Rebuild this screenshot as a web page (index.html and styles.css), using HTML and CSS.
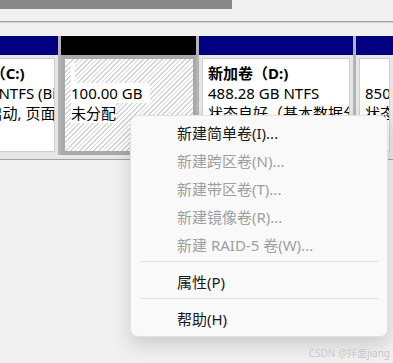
FILE: index.html
```html
<!DOCTYPE html>
<html lang="zh-CN">
<head>
<meta charset="utf-8">
<title>磁盘管理</title>
<link rel="stylesheet" href="styles.css">
</head>
<body>
<div class="screen">
  <div class="toppane"><div class="thumb"></div></div>
  <div class="divider"></div>
  <div class="spacer"></div>
  <div class="disk-row">
    <div class="part part-c">
      <div class="head head-primary"></div>
      <div class="body">
        <div class="box">
          <div class="line bold">Windows（C:)</div>
          <div class="line">237.85 GB NTFS (BitLocker 已加密)</div>
          <div class="line">状态良好(启动, 页面文件, 故障转储, 基本数据分区)</div>
        </div>
      </div>
    </div>
    <div class="part part-free">
      <div class="head head-free"></div>
      <div class="body body-selected">
        <div class="hatch">
          <div class="chip">&nbsp;</div>
          <div class="chip">100.00 GB&nbsp;&nbsp;</div>
          <div class="chip">未分配</div>
        </div>
      </div>
    </div>
    <div class="part part-d">
      <div class="head head-primary"></div>
      <div class="body">
        <div class="box">
          <div class="line bold">新加卷（D:)</div>
          <div class="line">488.28 GB NTFS</div>
          <div class="line">状态良好（基本数据分区）</div>
        </div>
      </div>
    </div>
    <div class="part part-e">
      <div class="head head-primary"></div>
      <div class="body">
        <div class="box">
          <div class="line bold">&nbsp;</div>
          <div class="line">850.00 GB NTFS</div>
          <div class="line">状态良好（基本数据分区）</div>
        </div>
      </div>
    </div>
  </div>
  <div class="row-foot"></div>
  <div class="rest"></div>
</div>

<div class="menu">
  <div class="item">新建简单卷(I)...</div>
  <div class="item disabled">新建跨区卷(N)...</div>
  <div class="item disabled">新建带区卷(T)...</div>
  <div class="item disabled">新建镜像卷(R)...</div>
  <div class="item disabled">新建 RAID-5 卷(W)...</div>
  <div class="sep"></div>
  <div class="item">属性(P)</div>
  <div class="sep"></div>
  <div class="item">帮助(H)</div>
</div>

<div class="watermark">CSDN @拌面jiang</div>
</body>
</html>
```

FILE: styles.css
```css
* { box-sizing: border-box; }

html, body {
  margin: 0;
  padding: 0;
}

body {
  width: 393px;
  height: 363px;
  overflow: hidden;
  position: relative;
  background: #f0f0f0;
  font-family: "Noto Sans", "Noto Sans CJK SC", sans-serif;
  font-size: 15px;
  color: #000;
}

.screen {
  display: flex;
  flex-direction: column;
  height: 100%;
}

.toppane {
  height: 21px;
  background: #f0f0f0;
}

.thumb {
  width: 232px;
  height: 9px;
  background: #878787;
}

.divider {
  height: 2px;
  border-top: 1px solid #a2a2a2;
  background: #d4d4d4;
}

.spacer {
  height: 13px;
  background: #f0f0f0;
}

.disk-row {
  display: flex;
  gap: 3px;
  height: 119px;
  background: #b4b4b4;
}

.part {
  display: flex;
  flex-direction: column;
  flex: none;
  overflow: hidden;
}

.part-c {
  width: 144px;
  margin-left: -86px;
}

.part-free { width: 135px; }
.part-d { width: 154px; }
.part-e { flex: 1; }

.head {
  height: 19px;
  flex: none;
}

.head-primary { background: #000080; }
.head-free { background: #000000; }

.body {
  flex: 1;
  padding: 3px;
  background: #e6e6e6;
  display: flex;
  overflow: hidden;
}

.box {
  flex: 1;
  background: #ffffff;
  border: 1px solid #cdcdcd;
  padding: 4px 0 0 5px;
  overflow: hidden;
  white-space: nowrap;
}

.line {
  height: 20px;
  line-height: 20px;
}

.bold { font-weight: 700; }

.body-selected {
  padding: 4px 3px 4px 4px;
  background: #a9a9a9;
}

.hatch {
  flex: 1;
  padding: 4px 0 0 6px;
  background: repeating-linear-gradient(135deg, #ffffff 0 2.3px, #d4d4d4 2.3px 3.3px);
  white-space: nowrap;
}

.chip {
  width: fit-content;
  height: 20px;
  line-height: 20px;
  background: #ffffff;
}

.row-foot {
  height: 5px;
  background: #e8e8e8;
  border-bottom: 1px solid #a2a2a2;
}

.rest {
  flex: 1;
  background: #f0f0f0;
}

.menu {
  position: absolute;
  left: 130px;
  top: 115px;
  width: 258px;
  height: 222px;
  padding: 3px 0;
  background: #f9f9f9;
  border: 1px solid #e2e2e2;
  border-radius: 8px;
  box-shadow: 0 8px 18px rgba(0, 0, 0, 0.15);
}

.item {
  height: 28px;
  line-height: 28px;
  padding-left: 46px;
  color: #1a1a1a;
  white-space: nowrap;
}

.item.disabled { color: #9f9f9f; }

.sep {
  height: 1px;
  margin: 2px 9px 6px;
  background: #e0e0e0;
}

.watermark {
  position: absolute;
  right: 3px;
  bottom: 4px;
  font-size: 10px;
  line-height: 12px;
  color: #c2c2c2;
  text-shadow: 0 0 1px #ffffff;
  white-space: nowrap;
}
```
